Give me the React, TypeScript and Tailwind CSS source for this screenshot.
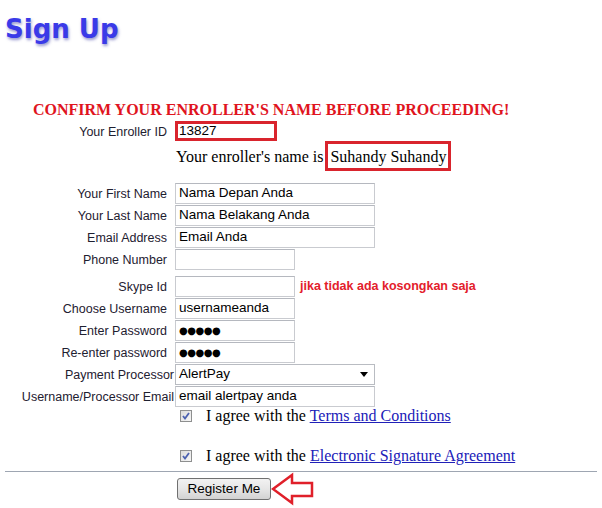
import React from "react";

const LABEL = "font-['Liberation_Sans',Arial,sans-serif] text-[12.5px] text-[#1e2030]";
const INPUT_TXT = "font-['Liberation_Sans',Arial,sans-serif] text-[13.5px] text-black";

function Label({ text, pr = "pr-[8px]" }: { text: string; pr?: string }) {
  return (
    <div className={`w-[175px] shrink-0 text-right whitespace-nowrap pt-[2px] ${pr} ${LABEL}`}>{text}</div>
  );
}

function Box({ w, value, dots }: { w: string; value?: string; dots?: boolean }) {
  return (
    <div
      className={`${w} h-[21px] border border-[#c9cbd0] border-t-[#b5b8bf] bg-white flex items-center pl-[3px] pt-[1px] overflow-hidden whitespace-nowrap`}
    >
      {dots ? (
        <span className="font-['DejaVu_Sans',sans-serif] text-[10px] tracking-[-0.5px] text-black">●●●●●</span>
      ) : (
        <span className={INPUT_TXT}>{value}</span>
      )}
    </div>
  );
}

function Row({ label, children, pr, extra = "" }: { label: string; children: React.ReactNode; pr?: string; extra?: string }) {
  return (
    <div className={`flex items-center h-[22px] ${extra}`}>
      <Label text={label} pr={pr} />
      {children}
    </div>
  );
}

function Check() {
  return (
    <div className="w-[12px] h-[12px] border border-[#8e8f8f] bg-gradient-to-br from-[#dcdcdc] to-[#f6f6f6] flex items-center justify-center">
      <svg width="10" height="10" viewBox="0 0 10 10">
        <path d="M2 5 L4 7.5 L8 2" fill="none" stroke="#4b61b0" strokeWidth="1.8" />
      </svg>
    </div>
  );
}

export default function App() {
  return (
    <div className="w-[602px] h-[508px] bg-white overflow-hidden">
      <div className="pt-[14px] pl-[5px] h-[101px]">
        <div className="font-['DejaVu_Sans',Verdana,sans-serif] font-bold text-[26px] leading-[30px] text-[#3a3ae8] [text-shadow:1px_2px_3px_rgba(70,70,170,0.55)]">
          Sign Up
        </div>
      </div>
      <div className="pl-[33px] h-[20px] font-['Liberation_Serif',serif] font-bold text-[16px] leading-[18px] text-[#e0141e] whitespace-nowrap">
        CONFIRM YOUR ENROLLER'S NAME BEFORE PROCEEDING!
      </div>
      <div className="flex items-center h-[20px]">
        <div className={`w-[175px] shrink-0 text-right pr-[8px] pt-[3px] ${LABEL}`}>Your Enroller ID</div>
        <div className="w-[102px] h-[20px] border-[3px] border-[#d9242d] bg-white flex items-center pl-[1px]">
          <span className={INPUT_TXT}>13827</span>
        </div>
      </div>
      <div className="flex items-center h-[30px] pl-[176px] font-['Liberation_Serif',serif] text-[16px] text-black whitespace-nowrap">
        <span className="pt-[1px]">Your enroller's name is</span>
        <div className="ml-[2px] h-[30px] border-[3px] border-[#d9242d] flex items-center px-[2px] pt-[2px]">
          Suhandy Suhandy
        </div>
      </div>
      <div className="h-[11px]" />
      <Row label="Your First Name"><Box w="w-[200px]" value="Nama Depan Anda" /></Row>
      <Row label="Your Last Name"><Box w="w-[200px]" value="Nama Belakang Anda" /></Row>
      <Row label="Email Address"><Box w="w-[200px]" value="Email Anda" /></Row>
      <Row label="Phone Number" extra="mb-[5px]"><Box w="w-[120px]" /></Row>
      <Row label="Skype Id">
        <Box w="w-[120px]" />
        <span className="ml-[5px] pt-[1px] font-['Liberation_Sans',Arial,sans-serif] font-bold text-[12.5px] text-[#e3202b]">
          jika tidak ada kosongkan saja
        </span>
      </Row>
      <Row label="Choose Username"><Box w="w-[120px]" value="usernameanda" /></Row>
      <Row label="Enter Password"><Box w="w-[120px]" dots /></Row>
      <Row label="Re-enter password"><Box w="w-[120px]" dots /></Row>
      <Row label="Payment Processor" pr="pr-[1px]">
        <div className="w-[200px] h-[21px] border border-[#b9bcc2] bg-white flex items-center justify-between pl-[3px] pr-[6px]">
          <span className={INPUT_TXT}>AlertPay</span>
          <svg width="8" height="5" viewBox="0 0 8 5">
            <path d="M0 0 H8 L4 5 Z" fill="#000" />
          </svg>
        </div>
      </Row>
      <Row label="Username/Processor Email" pr="pr-[1px]">
        <Box w="w-[200px]" value="email alertpay anda" />
      </Row>
      <div className="flex items-center h-[18px] pl-[180px]">
        <Check />
        <span className="ml-[14px] font-['Liberation_Serif',serif] text-[16px] text-black whitespace-nowrap">
          I agree with the <span className="text-[#2020b8] underline">Terms and Conditions</span>
        </span>
      </div>
      <div className="h-[21px]" />
      <div className="flex items-center h-[20px] pl-[180px]">
        <Check />
        <span className="ml-[14px] font-['Liberation_Serif',serif] text-[16px] text-black whitespace-nowrap">
          I agree with the <span className="text-[#2020b8] underline">Electronic Signature Agreement</span>
        </span>
      </div>
      <div className="mt-[5px] mx-[5px] h-0 border-t border-[#9ea6b2]" />
      <div className="flex items-start pl-[177px] mt-[6px]">
        <div className="w-[94px] h-[22px] border border-[#707070] rounded-[3px] bg-gradient-to-b from-[#f2f2f2] via-[#e6e6e6] to-[#d2d2d2] flex items-center justify-center font-['Liberation_Sans',Arial,sans-serif] text-[13.5px] text-black">
          Register Me
        </div>
        <svg width="44" height="34" viewBox="0 0 44 34" className="-my-[6px]">
          <path d="M2 17 L21 3 L21 11 L41 11 L41 24 L21 24 L21 31 Z" fill="none" stroke="#e0202a" strokeWidth="2.5" strokeLinejoin="miter" />
        </svg>
      </div>
    </div>
  );
}
